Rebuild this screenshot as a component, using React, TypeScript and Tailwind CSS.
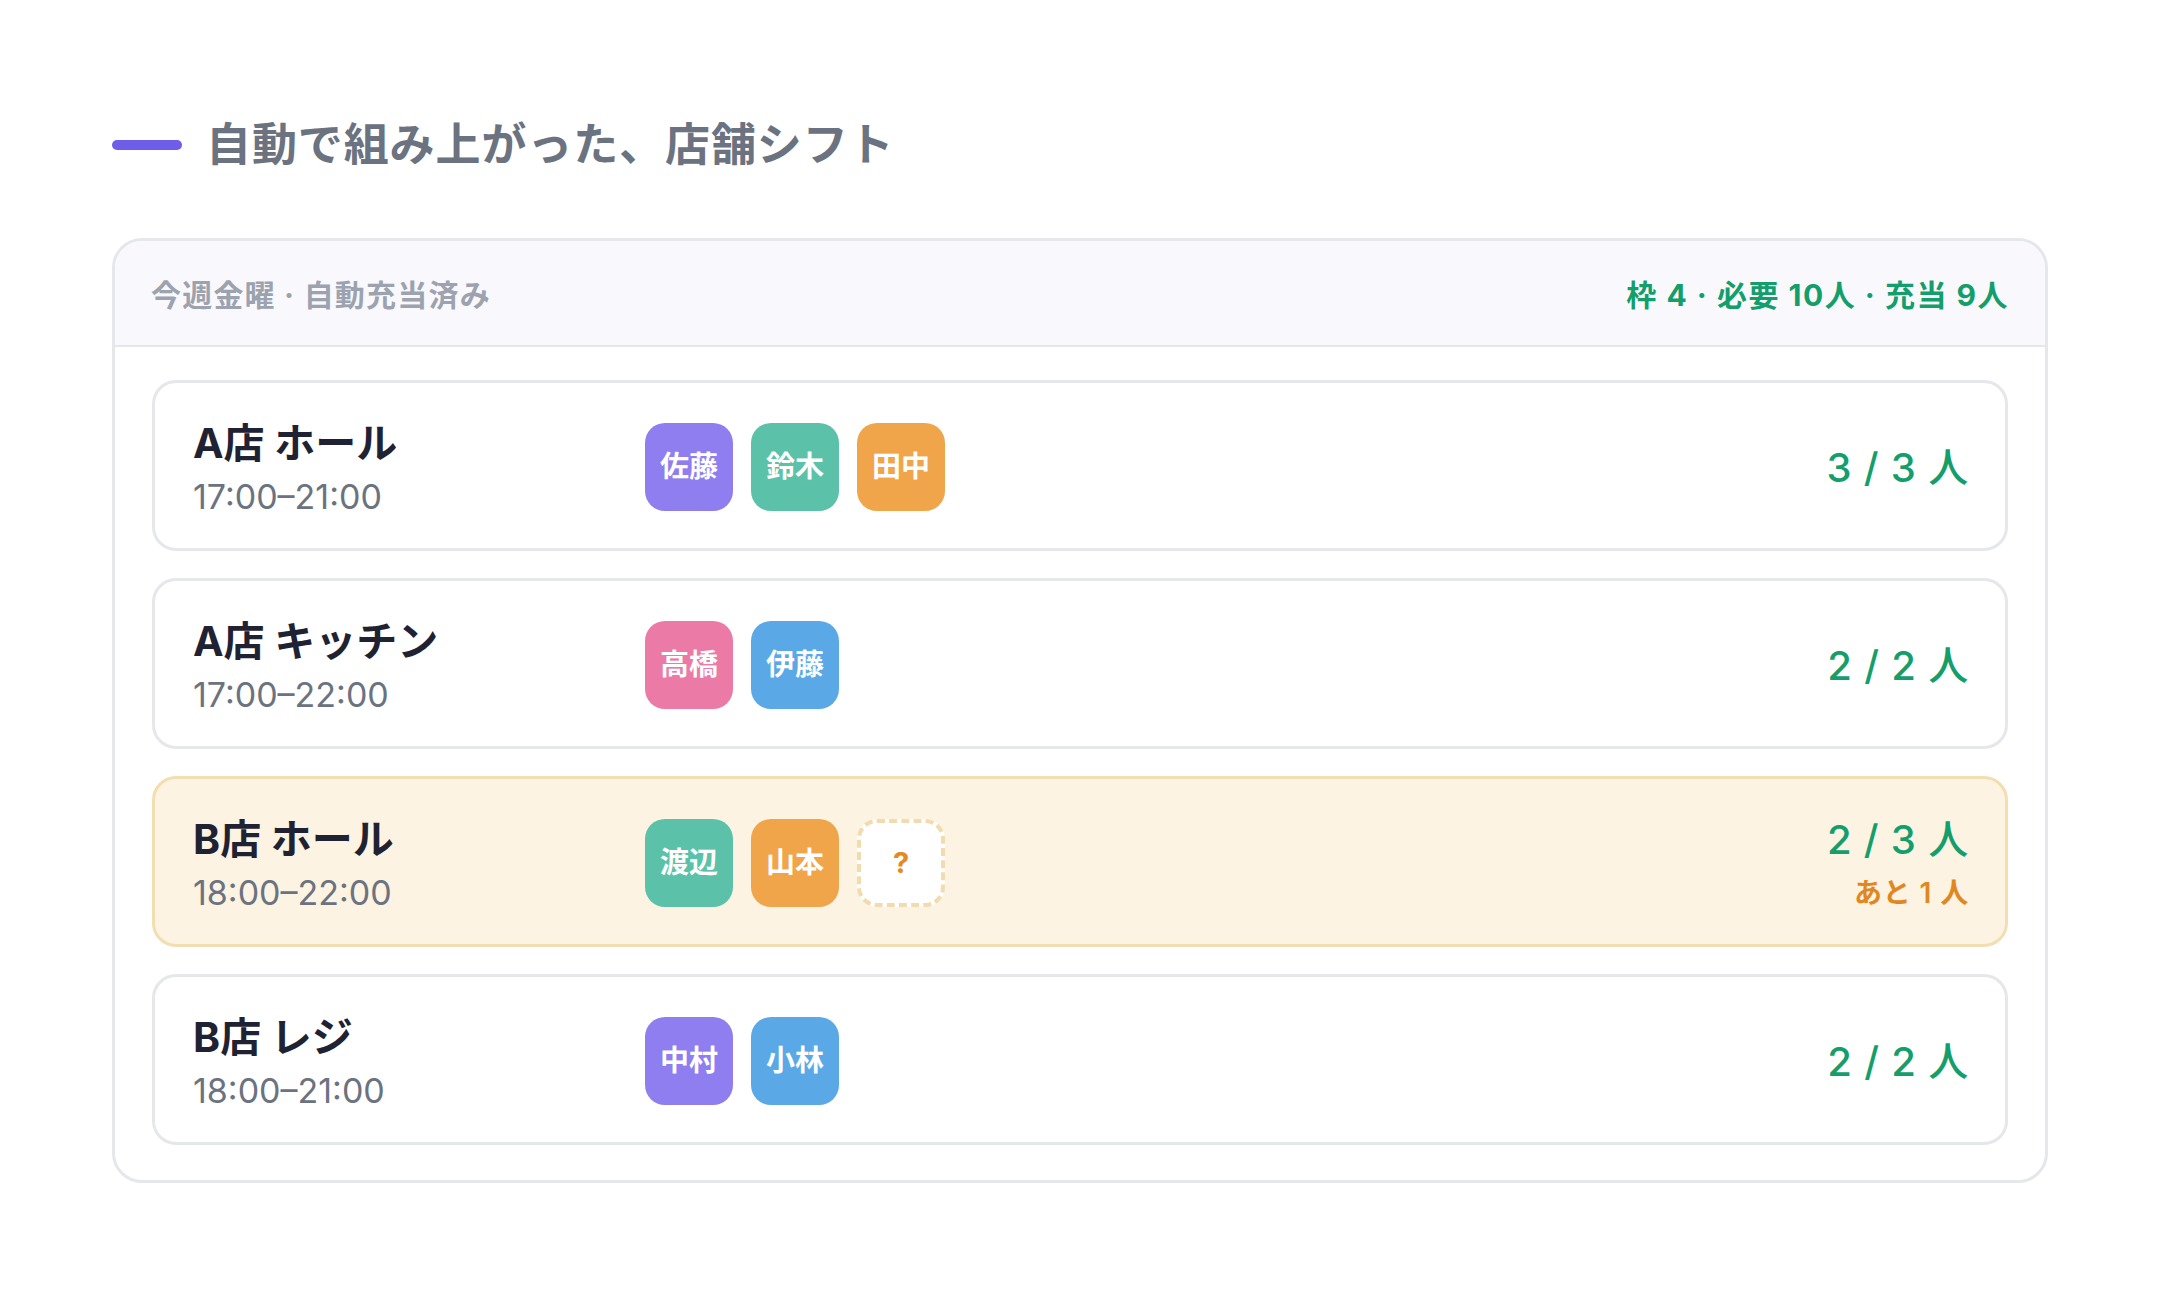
import React from "react"

type Shift = {
  name: string
  time: string
  staff: { label: string; color: string }[]
  need: number
  short?: boolean
}

const PURPLE = "bg-[#8f7ef0]"
const TEAL = "bg-[#5bc2a9]"
const ORANGE = "bg-[#f0a54b]"
const PINK = "bg-[#eb7ba6]"
const BLUE = "bg-[#5aa9e6]"

const shifts: Shift[] = [
  {
    name: "A店 ホール",
    time: "17:00–21:00",
    staff: [
      { label: "佐藤", color: PURPLE },
      { label: "鈴木", color: TEAL },
      { label: "田中", color: ORANGE },
    ],
    need: 3,
  },
  {
    name: "A店 キッチン",
    time: "17:00–22:00",
    staff: [
      { label: "高橋", color: PINK },
      { label: "伊藤", color: BLUE },
    ],
    need: 2,
  },
  {
    name: "B店 ホール",
    time: "18:00–22:00",
    staff: [
      { label: "渡辺", color: TEAL },
      { label: "山本", color: ORANGE },
    ],
    need: 3,
    short: true,
  },
  {
    name: "B店 レジ",
    time: "18:00–21:00",
    staff: [
      { label: "中村", color: PURPLE },
      { label: "小林", color: BLUE },
    ],
    need: 2,
  },
]

function ShiftRow({ shift }: { shift: Shift }) {
  const filled = shift.staff.length
  const missing = shift.need - filled
  return (
    <div
      className={
        shift.short
          ? "flex h-[171px] items-center rounded-[24px] border-[3px] border-[#f3deb2] bg-[#fcf3e2] pl-[38px] pr-9"
          : "flex h-[171px] items-center rounded-[24px] border-[3px] border-[#e6e7eb] bg-white pl-[38px] pr-9"
      }
    >
      <div className="flex w-[452px] shrink-0 flex-col gap-[9px] pt-[6px]">
        <div className="text-[41px] font-bold leading-[48px] text-[#1f2233]">{shift.name}</div>
        <div className="text-[34px] font-normal leading-[42px] text-[#6b7280]">{shift.time}</div>
      </div>

      <div className="flex flex-1 items-center gap-[18px] pt-[2px]">
        {shift.staff.map((s) => (
          <div
            key={s.label}
            className={`flex h-[88px] w-[88px] items-center justify-center rounded-[20px] text-[29px] font-bold text-white ${s.color}`}
          >
            {s.label}
          </div>
        ))}
        {missing > 0 && (
          <div className="flex h-[88px] w-[88px] items-center justify-center rounded-[20px] border-4 border-dashed border-[#f2dcae] bg-white text-[29px] font-bold text-[#e38b1d]">
            ?
          </div>
        )}
      </div>

      <div className="flex flex-col items-end gap-[11px] pt-[4px]">
        <div className="text-[40px] font-medium leading-[48px] tracking-[0.02em] text-[#139e6b]">
          {filled} / {shift.need} 人
        </div>
        {missing > 0 && (
          <div className="text-[28px] font-semibold leading-[36px] tracking-[0.03em] text-[#e0881f]">
            あと {missing} 人
          </div>
        )}
      </div>
    </div>
  )
}

export default function App() {
  return (
    <div
      className="min-h-[1296px] bg-white px-[112px] pt-[115px]"
      style={{ fontFamily: 'Inter, "Noto Sans CJK JP", "Noto Sans", sans-serif' }}
    >
      <div className="mb-[63px] flex h-[60px] items-center gap-[24px]">
        <div className="h-[10px] w-[70px] rounded-full bg-[#6d5de8]" />
        <h1 className="text-[45px] font-bold leading-[60px] tracking-[0.02em] text-[#6b7280]">
          自動で組み上がった、店舗シフト
        </h1>
      </div>

      <div className="overflow-hidden rounded-[30px] border-[3px] border-[#e6e7eb] bg-white">
        <div className="flex h-[106px] items-center justify-between border-b-2 border-[#e6e7eb] bg-[#f9f9fd] px-9 pt-[4px]">
          <div className="text-[30px] font-bold tracking-[0.04em] text-[#9ca3af]">今週金曜 · 自動充当済み</div>
          <div className="text-[30px] font-bold tracking-[0.05em] text-[#139e6b]">枠 4 · 必要 10人 · 充当 9人</div>
        </div>
        <div className="flex flex-col gap-[27px] px-[37px] pb-[35px] pt-[33px]">
          {shifts.map((s) => (
            <ShiftRow key={s.name} shift={s} />
          ))}
        </div>
      </div>
    </div>
  )
}
